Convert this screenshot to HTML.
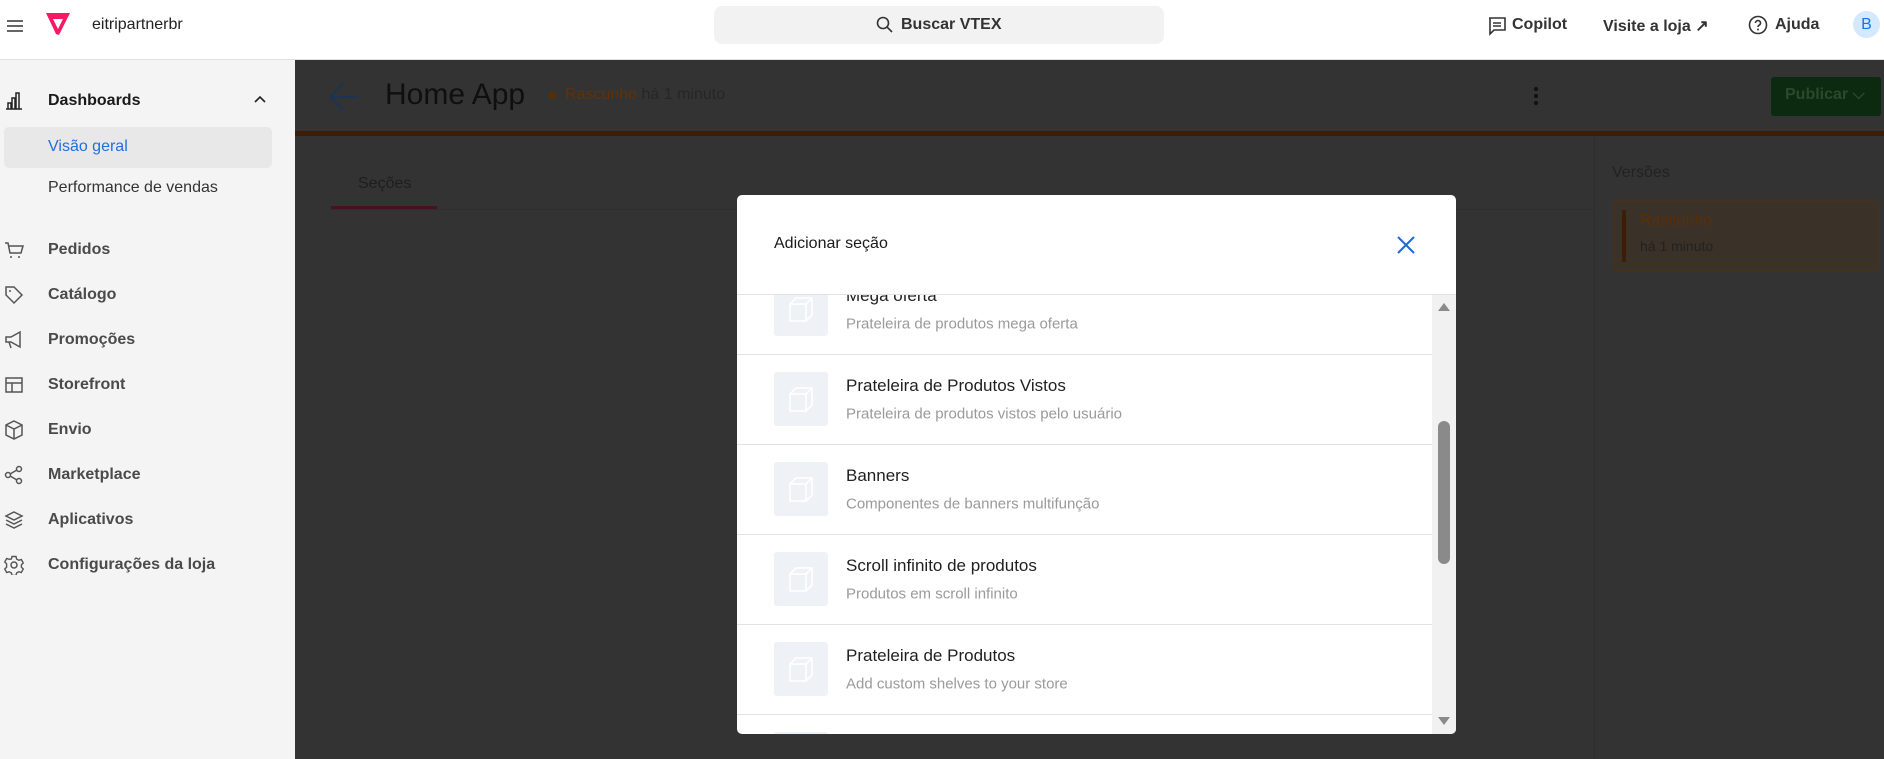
<!DOCTYPE html>
<html><head><meta charset="utf-8"><style>
*{margin:0;padding:0;box-sizing:border-box}
html,body{width:1884px;height:759px;overflow:hidden}
body{font-family:"Liberation Sans",sans-serif;background:#333;position:relative}
.a{position:absolute}
.hdr{left:0;top:0;width:1884px;height:60px;background:#fff;border-bottom:1px solid #e0e0e0}
.side{left:0;top:60px;width:295px;height:699px;background:#f4f4f4;overflow:hidden}
.nav{position:absolute;left:48px;font-size:16px;font-weight:bold;color:#4a4a4a;transform:translateY(-50%)}
.ic{position:absolute;left:4px;width:20px;height:20px;transform:translateY(-50%)}
.item{position:absolute;left:0;width:695px;height:90px;border-bottom:1px solid #e3e3e3}
.box{position:absolute;left:37px;top:17px;width:54px;height:54px;background:#eef2f6;border-radius:3px}
.box svg{position:absolute;left:13px;top:13px}
.t{position:absolute;left:109px;top:31px;transform:translateY(-50%);font-size:17px;color:#1f1f1f;white-space:nowrap}
.d{position:absolute;left:109px;top:59px;transform:translateY(-50%);font-size:15px;color:#9a9a9a;white-space:nowrap}
</style></head><body>
<div class="a hdr">
 <svg class="a" style="left:6px;top:17px" width="18" height="18" viewBox="0 0 18 18"><path d="M1 4h16M1 9h16M1 14h16" stroke="#333" stroke-width="1.6"/></svg>
 <svg class="a" style="left:44px;top:12px" width="28" height="24" viewBox="0 0 28 24"><path d="M2 1h24l-3 6-8 16-3-1z" fill="#f71963"/><path d="M9 7h10l-5 10z" fill="#fff"/></svg>
 <div class="a" style="left:92px;top:16px;font-size:16px;color:#222">eitripartnerbr</div>
 <div class="a" style="left:714px;top:6px;width:450px;height:38px;background:#f2f2f2;border-radius:8px"></div>
 <svg class="a" style="left:876px;top:16px" width="17" height="17" viewBox="0 0 17 17"><circle cx="7" cy="7" r="5.5" fill="none" stroke="#333" stroke-width="1.6"/><path d="M11 11l5 5" stroke="#333" stroke-width="1.6"/></svg>
 <div class="a" style="left:901px;top:16px;font-size:16px;color:#333;font-weight:bold">Buscar VTEX</div>
 <svg class="a" style="left:1487px;top:16px" width="20" height="20" viewBox="0 0 20 20"><path d="M2 2h16v12H7l-4 4V2z" fill="none" stroke="#333" stroke-width="1.6"/><path d="M6 7h8M6 10h8" stroke="#333" stroke-width="1.5"/></svg>
 <div class="a" style="left:1512px;top:16px;font-size:16px;font-weight:bold;color:#333">Copilot</div>
 <div class="a" style="left:1603px;top:16px;font-size:16px;font-weight:bold;color:#333">Visite a loja ↗</div>
 <svg class="a" style="left:1748px;top:15px" width="20" height="20" viewBox="0 0 20 20"><circle cx="10" cy="10" r="8.5" fill="none" stroke="#333" stroke-width="1.6"/><path d="M7.5 8a2.5 2.5 0 1 1 3.5 2.3c-.8.4-1 .9-1 1.7" fill="none" stroke="#333" stroke-width="1.6"/><circle cx="10" cy="14.5" r="1" fill="#333"/></svg>
 <div class="a" style="left:1775px;top:16px;font-size:16px;font-weight:bold;color:#333">Ajuda</div>
 <div class="a" style="left:1853px;top:11px;width:27px;height:27px;border-radius:50%;background:#d4e9fd;color:#1a73e8;font-size:16px;text-align:center;line-height:27px">B</div>
</div>
<div class="a side">
 <svg class="ic" style="top:41px" viewBox="0 0 20 20"><path d="M2 18h16M4 18v-6h3v6M8 18V7h3v11M12 18V2h3v16" fill="none" stroke="#222" stroke-width="1.5"/></svg>
 <div class="nav" style="top:41px;color:#1a1a1a">Dashboards</div>
 <svg class="a" style="left:253px;top:34px" width="14" height="10" viewBox="0 0 14 10"><path d="M2 8l5-5 5 5" fill="none" stroke="#222" stroke-width="1.6"/></svg>
 <div class="a" style="left:4px;top:67px;width:268px;height:41px;background:#e8e8e8;border-radius:5px"></div>
 <div class="nav" style="top:87px;color:#1f6fe0;font-weight:normal">Visão geral</div>
 <div class="nav" style="top:128px;color:#333;font-weight:normal">Performance de vendas</div>
 <svg class="ic" style="top:190px" viewBox="0 0 20 20"><path d="M1 3h3l2 10h11l2-7H5" fill="none" stroke="#555" stroke-width="1.5"/><circle cx="7" cy="17" r="1" fill="#555"/><circle cx="15" cy="17" r="1" fill="#555"/></svg>
 <div class="nav" style="top:190px">Pedidos</div>
 <svg class="ic" style="top:235px" viewBox="0 0 20 20"><path d="M2 2h8l8 8-8 8-8-8z" fill="none" stroke="#555" stroke-width="1.5"/><circle cx="6" cy="6" r="1" fill="#555"/></svg>
 <div class="nav" style="top:235px">Catálogo</div>
 <svg class="ic" style="top:280px" viewBox="0 0 20 20"><path d="M2 7h5l9-5v15l-9-5H2zM5 12l2 6" fill="none" stroke="#555" stroke-width="1.5"/></svg>
 <div class="nav" style="top:280px">Promoções</div>
 <svg class="ic" style="top:325px" viewBox="0 0 20 20"><rect x="2" y="3" width="16" height="14" fill="none" stroke="#555" stroke-width="1.5"/><path d="M2 8h16M8 8v9" stroke="#555" stroke-width="1.5"/></svg>
 <div class="nav" style="top:325px">Storefront</div>
 <svg class="ic" style="top:370px" viewBox="0 0 20 20"><path d="M10 1l8 4v10l-8 4-8-4V5zM2 5l8 4 8-4M10 9v10" fill="none" stroke="#555" stroke-width="1.5"/></svg>
 <div class="nav" style="top:370px">Envio</div>
 <svg class="ic" style="top:415px" viewBox="0 0 20 20"><circle cx="4" cy="10" r="2.5" fill="none" stroke="#555" stroke-width="1.5"/><circle cx="15" cy="4" r="2.5" fill="none" stroke="#555" stroke-width="1.5"/><circle cx="15" cy="16" r="2.5" fill="none" stroke="#555" stroke-width="1.5"/><path d="M6 9l7-4M6 11l7 4" stroke="#555" stroke-width="1.5"/></svg>
 <div class="nav" style="top:415px">Marketplace</div>
 <svg class="ic" style="top:460px" viewBox="0 0 20 20"><path d="M10 2l8 4-8 4-8-4zM2 10l8 4 8-4M2 14l8 4 8-4" fill="none" stroke="#555" stroke-width="1.5"/></svg>
 <div class="nav" style="top:460px">Aplicativos</div>
 <svg class="ic" style="top:505px" viewBox="0 0 20 20"><circle cx="10" cy="10" r="3" fill="none" stroke="#555" stroke-width="1.5"/><path d="M8 1.5h4l.6 2.5 2.2 1.3 2.5-.8 2 3.5-1.9 1.8v2.4l1.9 1.8-2 3.5-2.5-.8-2.2 1.3-.6 2.5H8l-.6-2.5-2.2-1.3-2.5.8-2-3.5 1.9-1.8V8.8L.7 7l2-3.5 2.5.8L7.4 4z" fill="none" stroke="#555" stroke-width="1.4"/></svg>
 <div class="nav" style="top:505px">Configurações da loja</div>
</div>
<svg class="a" style="left:328px;top:82px" width="32" height="30" viewBox="0 0 32 30"><path d="M30 15H3M15 2L2 15l13 13" fill="none" stroke="#1c3352" stroke-width="2"/></svg>
<div class="a" style="left:385px;top:78px;font-size:30px;color:#0f0f0f">Home App</div>
<div class="a" style="left:549px;top:92px;width:7px;height:7px;border-radius:50%;background:#5a2e00"></div>
<div class="a" style="left:565px;top:86px;font-size:16px;color:#5e3208">Rascunho <span style="color:#262626">há 1 minuto</span></div>
<div class="a" style="left:1534px;top:87px;width:4px;height:4px;border-radius:50%;background:#111;box-shadow:0 7px 0 #111,0 14px 0 #111"></div>
<div class="a" style="left:1771px;top:77px;width:110px;height:39px;background:#0b2a0f;border-radius:3px;color:#2a4a2c;font-size:16px;font-weight:bold;padding:9px 0 0 14px">Publicar ⌵</div>
<div class="a" style="left:295px;top:131px;width:1589px;height:5px;background:#3d1e04"></div>
<div class="a" style="left:331px;top:209px;width:1264px;height:1px;background:#2e2e2e"></div>
<div class="a" style="left:358px;top:175px;font-size:16px;color:#1e1e1e">Seções</div>
<div class="a" style="left:331px;top:206px;width:106px;height:3px;background:#4a1020"></div>
<div class="a" style="left:1594px;top:136px;width:1px;height:623px;background:#2e2e2e"></div>
<div class="a" style="left:1612px;top:164px;font-size:16px;color:#222">Versões</div>
<div class="a" style="left:1613px;top:200px;width:267px;height:71px;background:#3a3128;border:1px solid #4a3018;border-radius:4px"></div>
<div class="a" style="left:1622px;top:210px;width:4px;height:52px;background:#3d1e04"></div>
<div class="a" style="left:1640px;top:212px;font-size:16px;color:#5a2e08">Rascunho</div>
<div class="a" style="left:1640px;top:238px;font-size:14px;color:#222">há 1 minuto</div>
<div class="a" style="left:737px;top:195px;width:719px;height:539px;background:#fff;border-radius:5px;overflow:hidden">
 <div class="a" style="left:37px;top:40px;font-size:16px;color:#1a1a1a">Adicionar seção</div>
 <svg class="a" style="left:659px;top:40px" width="20" height="20" viewBox="0 0 20 20"><path d="M2 2l16 16M18 2L2 18" stroke="#1a6ad8" stroke-width="2"/></svg>
 <div class="a" style="left:0;top:99px;width:719px;height:1px;background:#e3e3e3"></div>
 <div class="a" style="left:0;top:100px;width:719px;height:439px;overflow:hidden">
  <div class="item" style="top:-30px"><div class="box"><svg width="28" height="28" viewBox="0 0 28 28"><path d="M3 9h16v17H3zM3 9l6-6h16v17l-6 6M19 9l6-6" fill="none" stroke="#fff" stroke-width="1.6"/></svg></div><div class="t">Mega oferta</div><div class="d">Prateleira de produtos mega oferta</div></div>
  <div class="item" style="top:60px"><div class="box"><svg width="28" height="28" viewBox="0 0 28 28"><path d="M3 9h16v17H3zM3 9l6-6h16v17l-6 6M19 9l6-6" fill="none" stroke="#fff" stroke-width="1.6"/></svg></div><div class="t">Prateleira de Produtos Vistos</div><div class="d">Prateleira de produtos vistos pelo usuário</div></div>
  <div class="item" style="top:150px"><div class="box"><svg width="28" height="28" viewBox="0 0 28 28"><path d="M3 9h16v17H3zM3 9l6-6h16v17l-6 6M19 9l6-6" fill="none" stroke="#fff" stroke-width="1.6"/></svg></div><div class="t">Banners</div><div class="d">Componentes de banners multifunção</div></div>
  <div class="item" style="top:240px"><div class="box"><svg width="28" height="28" viewBox="0 0 28 28"><path d="M3 9h16v17H3zM3 9l6-6h16v17l-6 6M19 9l6-6" fill="none" stroke="#fff" stroke-width="1.6"/></svg></div><div class="t">Scroll infinito de produtos</div><div class="d">Produtos em scroll infinito</div></div>
  <div class="item" style="top:330px"><div class="box"><svg width="28" height="28" viewBox="0 0 28 28"><path d="M3 9h16v17H3zM3 9l6-6h16v17l-6 6M19 9l6-6" fill="none" stroke="#fff" stroke-width="1.6"/></svg></div><div class="t">Prateleira de Produtos</div><div class="d">Add custom shelves to your store</div></div>
  <div class="item" style="top:420px;height:19px;border:0"><div class="box"></div></div>
  <div class="a" style="left:695px;top:0;width:24px;height:439px;background:#f1f1f1"></div>
  <div class="a" style="left:701px;top:8px;width:0;height:0;border-left:6px solid transparent;border-right:6px solid transparent;border-bottom:8px solid #8a8a8a"></div>
  <div class="a" style="left:701px;top:422px;width:0;height:0;border-left:6px solid transparent;border-right:6px solid transparent;border-top:8px solid #8a8a8a"></div>
  <div class="a" style="left:701px;top:126px;width:12px;height:143px;background:#8a8a8a;border-radius:6px"></div>
 </div>
</div>
</body></html>
